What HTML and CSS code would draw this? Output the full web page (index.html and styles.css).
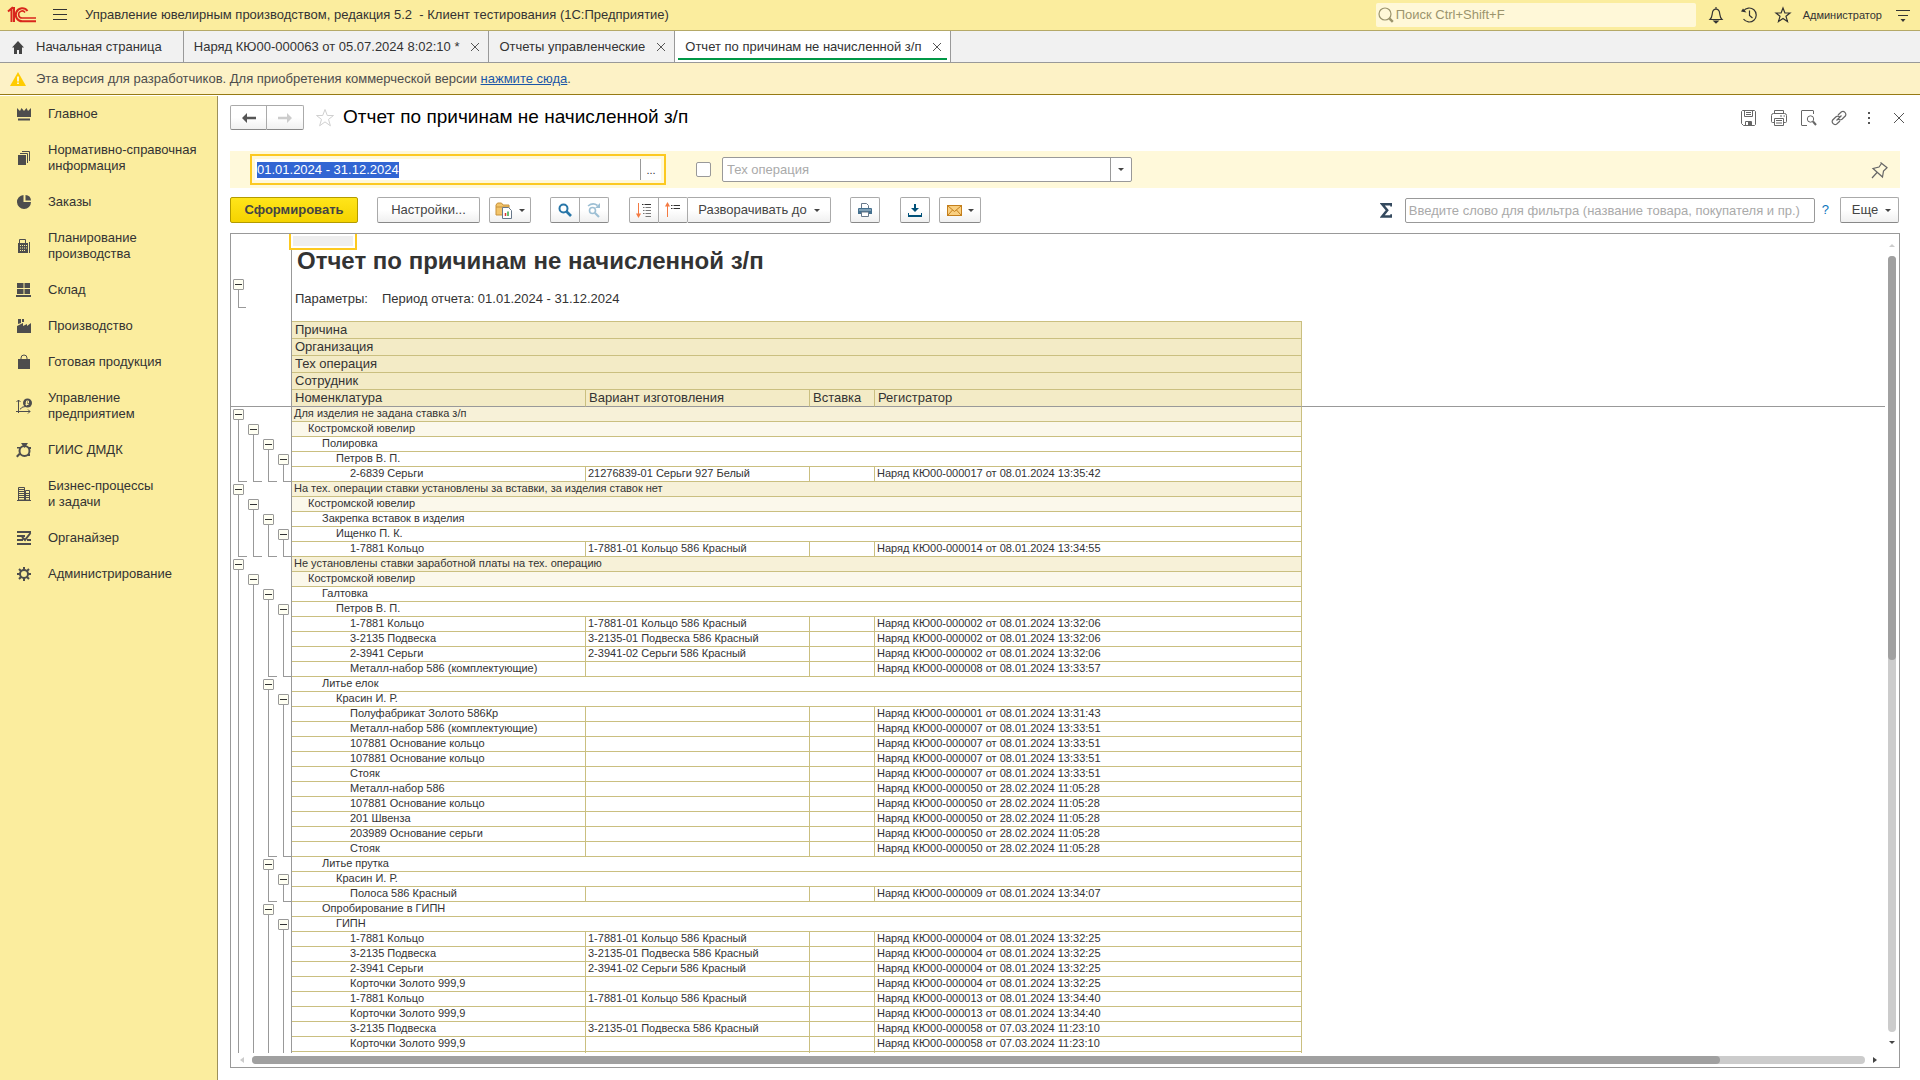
FILE: index.html
```html
<!DOCTYPE html>
<html lang="ru">
<head>
<meta charset="utf-8">
<title>Отчет по причинам не начисленной з/п</title>
<link rel="stylesheet" href="styles.css">
</head>
<body>
<header class="topbar">
  <svg class="logo" width="30" height="18" viewBox="0 0 30 18" fill="none" stroke="#d9261c" stroke-width="2"><path d="M1 5.500 4.500 2.500V16M4.500 2H7V16"/><path d="M20.500 5A6.500 6.500 0 1 0 15.500 15.300H29"/><path d="M18 6.500A3.500 3.500 0 1 0 15.500 12H29" stroke-width="1.600"/></svg>
  <button class="plain burger" aria-label="Меню"><svg width="16" height="14" viewBox="0 0 16 14" stroke="#333"><path d="M1 1.500h14M1 6.500h14M1 11.500h14"/></svg></button>
  <h1 class="app-title">Управление ювелирным производством, редакция 5.2 &nbsp;- Клиент тестирования (1С:Предприятие)</h1>
  <label class="search">
    <svg width="16" height="16" viewBox="0 0 16 16" fill="none" stroke="#9b946d" stroke-width="1.200"><circle cx="7" cy="7" r="6"/><path d="m11.300 11.300 3.500 3.500" stroke-width="2.500"/></svg>
    <input type="text" placeholder="Поиск Ctrl+Shift+F" aria-label="Поиск">
  </label>
  <nav class="top-tools">
    <button class="plain" aria-label="Оповещения"><svg width="16" height="18" viewBox="0 0 16 18" fill="none" stroke="#333" stroke-width="1.200"><path d="M2 13.500c2-2 2-3.500 2.300-6C4.600 4.500 6 3.200 8 3.200s3.400 1.300 3.700 4.300c.3 2.500.3 4 2.300 6ZM8 3V1"/><path d="M6 15h4l-2 2Z" fill="#333"/></svg></button>
    <button class="plain" aria-label="История"><svg width="18" height="18" viewBox="0 0 18 18" fill="none" stroke="#333" stroke-width="1.200"><path d="M3.500 5A7 7 0 1 1 3.500 13M9.500 4.500v5l3 2.500"/><path d="m1 5.500 5.500 1-3.500-4Z" fill="#333" stroke="none"/></svg></button>
    <button class="plain" aria-label="Избранное"><svg width="18" height="18" viewBox="0 0 18 18" fill="none" stroke="#333" stroke-width="1.200"><path d="m9 2 1.900 5H16l-4 3.300 1.500 5.200L9 12.400l-4.500 3.100L6 10.300 2 7h5.100Z"/></svg></button>
    <a class="user" href="#user">Администратор</a>
    <button class="plain" aria-label="Сервис"><svg width="16" height="16" viewBox="0 0 16 16" fill="none" stroke="#333" stroke-width="1.200"><path d="M1 3.500h14M3 8.500h10"/><path d="M5.500 12h5L8 15Z" fill="#333" stroke="none"/></svg></button>
  </nav>
</header>

<nav class="tabs">
  <a class="tab tab-home" href="#home"><svg width="16" height="14" viewBox="0 0 16 14" fill="#444"><path d="M8 1 2 7.500h2V14h3v-4h2v4h3V7.500h2Z"/></svg>Начальная страница</a>
  <div class="tab"><a href="#t1">Наряд КЮ00-000063 от 05.07.2024 8:02:10 *</a><button class="plain x" aria-label="Закрыть"></button></div>
  <div class="tab"><a href="#t2">Отчеты управленческие</a><button class="plain x" aria-label="Закрыть"></button></div>
  <div class="tab active"><a href="#t3">Отчет по причинам не начисленной з/п</a><button class="plain x" aria-label="Закрыть"></button></div>
</nav>

<div class="notice">
  <svg width="16" height="14" viewBox="0 0 16 14"><path d="M8 0 16 14H0Z" fill="#fc0"/><path d="M7.200 4.500h1.600v5H7.200zM7.200 10.500h1.600v1.500H7.200z" fill="#fff"/></svg>
  <p>Эта версия для разработчиков. Для приобретения коммерческой версии <a href="#buy">нажмите сюда</a>.</p>
</div>

<div class="workspace">
  <nav class="side">
    <a href="#s1"><svg viewBox="0 0 16 14"><path d="M1 1l3 3 1.500-3L8 4l2.500-3L12 4l3-3v9H1zM2 11.500h12v2H2z"/></svg><span>Главное</span></a>
    <a href="#s2"><svg viewBox="0 0 16 14"><path d="M2 4h8v10H2z"/><path d="M4 2.500h7.500V12M6 .5h7.500V10" class="ln"/></svg><span>Нормативно-справочная информация</span></a>
    <a href="#s3"><svg viewBox="0 0 16 14"><path d="M7.500 0v7H15A7 7 0 1 1 7.500 0Z"/><path d="M9.500 0A6 6 0 0 1 15 5.500H9.500Z"/></svg><span>Заказы</span></a>
    <a href="#s4"><svg viewBox="0 0 16 14"><path d="M3.500.5h6v4h-6z" class="ln"/><path fill-rule="evenodd" d="M2 4h10v10H2zM4 6v1h1V6zM6 6v1h1V6zM8 6v1h1V6zM10 6v1h1V6zM4 8.500v1h1v-1zM6 8.500v1h1v-1zM8 8.500v1h1v-1zM10 8.500v1h1v-1zM4 11v1h1v-1zM6 11v1h1v-1zM8 11v1h1v-1zM13 3h1v11h-1z"/></svg><span>Планирование производства</span></a>
    <a href="#s5"><svg viewBox="0 0 16 14"><path d="M1 0h6.500v5H1zM8.500 0H14v5H8.500zM1 6h6.500v5H1zM8.500 6H14v5H8.500zM0 12h15v2H0z"/></svg><span>Склад</span></a>
    <a href="#s6"><svg viewBox="0 0 16 14"><path d="M1 14V7l6-3v3l4-2v2l4-3v10zM2 0h3v4L2 5zM6 0h2v3H6z"/></svg><span>Производство</span></a>
    <a href="#s7"><svg viewBox="0 0 16 14"><path d="M2 4h12v10H2z"/><path d="M5 6V3a3 3 0 0 1 6 0v3" class="ln"/></svg><span>Готовая продукция</span></a>
    <a href="#s8"><svg viewBox="0 0 16 14"><path d="M2.500 14V1M0 12.500h14M.5 3l2-2 2 2M12 10.500l2 2-2 2M4 10c2 0 1-2 3-2s2-1 3-1" class="ln"/><circle cx="11.500" cy="4" r="4.500"/><path d="M10.500 6.500V2h2v2h-3M9.500 5.500h3" stroke="#fbed9e" fill="none"/></svg><span>Управление предприятием</span></a>
    <a href="#s9"><svg viewBox="0 0 16 14"><circle cx="8.500" cy="8" r="5" class="ln w2"/><path d="M5 0h7L8.500 5zM0 13l3-3 1.500 1.500-3 3zM1 4h3v1.500H1zM13 4h2v2h-2zM12 11h2v2h-2z"/></svg><span>ГИИС ДМДК</span></a>
    <a href="#s10"><svg viewBox="0 0 16 14"><path d="M2.500.5h6V13h-6zM9.500 3.500h4V13h-4zM3 2.500h5M3 4.500h5M3 6.500h11M3 8.500h11M3 10.500h11M1 13.500h14" class="ln"/></svg><span>Бизнес-процессы<br>и задачи</span></a>
    <a href="#s11"><svg viewBox="0 0 16 14"><path d="M1 0h14v2H1zM1 4h8v2H1zM1 8h6v2H1zM11 8h4v2h-4zM1 12h14v2H1z"/><path d="m6 6 3 3 5.500-7" class="ln w2"/></svg><span>Органайзер</span></a>
    <a href="#s12"><svg viewBox="0 0 16 14"><circle cx="8" cy="7" r="4" class="ln w2"/><path d="M8 0v3M8 11v3M1 7h3M12 7h3M3 2l2 2M11 10l2 2M3 12l2-2M11 4l2-2" class="ln w2"/></svg><span>Администрирование</span></a>
  </nav>

  <main class="page">
    <div class="page-head">
      <div class="group nav-group">
        <button class="btn" aria-label="Назад"><svg width="14" height="10" viewBox="0 0 14 10"><path d="M0 5 5 0v3.700h9v2.600H5V10Z" fill="#555"/></svg></button>
        <button class="btn" aria-label="Вперед"><svg width="14" height="10" viewBox="0 0 14 10"><path d="M14 5 9 0v3.700H0v2.600h9V10Z" fill="#ccc"/></svg></button>
      </div>
      <button class="plain" aria-label="В избранное"><svg width="20" height="20" viewBox="0 0 20 20" fill="none" stroke="#d0d0d0"><path d="m10 1.500 2.300 6h6.200l-5 3.900 1.900 6.400-5.400-3.900-5.400 3.900 1.900-6.400-5-3.900h6.200Z"/></svg></button>
      <h2>Отчет по причинам не начисленной з/п</h2>
      <div class="page-tools">
        <button class="plain" aria-label="Сохранить"><svg width="16" height="16" viewBox="0 0 16 16" fill="none" stroke="#666"><path d="M1.500.5h12l1 1v13l-1 1h-11l-2-2v-12ZM3.500.5v6h8v-6M5 2.500h5M5 4.500h5M4.500 15.500v-4h6v4"/><path d="M7 12h3v3H7z" fill="#666" stroke="none"/></svg></button>
        <button class="plain" aria-label="Печать"><svg width="16" height="16" viewBox="0 0 16 16" fill="none" stroke="#666"><path d="M3.500 3.500v-3h9v3M3.500 12.500h-2q-1 0-1-1v-6q0-2 2-2h11q2 0 2 2v6q0 1-1 1h-2M3.500 8.500h9v7h-9zM5 10.500h6M5 13h6M9 6h2M12.500 6h1.500"/></svg></button>
        <button class="plain" aria-label="Просмотр"><svg width="16" height="16" viewBox="0 0 16 16" fill="none" stroke="#666"><path d="M6 15.500H1q-.5 0-.5-.5V1Q.5.500 1 .500h11q.5 0 .5.500v3"/><circle cx="9.500" cy="9" r="3.200"/><path d="m12 11.500 3 3.500" stroke-width="2"/></svg></button>
        <button class="plain" aria-label="Ссылка"><svg width="16" height="16" viewBox="0 0 16 16" fill="none" stroke="#666" stroke-width="1.200"><path d="M7 5 10.500 1.800a3 3 0 0 1 4 4L11 9.200q-2 1.300-3.500 0M9 11l-3.500 3.200a3 3 0 0 1-4-4L5 6.800q2-1.300 3.500 0M5.500 10.500l5-5"/></svg></button>
        <button class="plain" aria-label="Еще"><svg width="16" height="16" viewBox="0 0 16 16" fill="#555"><path d="M7 2h2v2H7zM7 7h2v2H7zM7 12h2v2H7z"/></svg></button>
        <button class="plain" aria-label="Закрыть"><svg width="16" height="16" viewBox="0 0 16 16" stroke="#555"><path d="m3 3 10 10M13 3 3 13"/></svg></button>
      </div>
    </div>

    <div class="filters">
      <div class="date">
        <input id="period" type="text" value="01.01.2024 - 31.12.2024" aria-label="Период">
        <button class="plain" aria-label="Выбрать период">...</button>
      </div>
      <input type="checkbox" aria-label="Отбор по тех операции">
      <div class="combo">
        <input type="text" placeholder="Тех операция" aria-label="Тех операция">
        <button class="plain" aria-label="Открыть список"><i class="caret"></i></button>
      </div>
      <button class="plain pin" aria-label="Закрепить"><svg width="18" height="18" viewBox="0 0 18 18" fill="none" stroke="#666" stroke-width="1.200"><path d="m9.500 1.500 7 5.500M10.500 2.500 8 6l-6 1.500 9.500 8.500 1-6L16 6.700M6 11.500 1 17"/></svg></button>
    </div>

    <div class="toolbar">
      <button class="btn primary">Сформировать</button>
      <button class="btn settings">Настройки...</button>
      <button class="btn menu" aria-label="Варианты отчета"><svg width="18" height="17" viewBox="0 0 18 17"><path d="M1 3 2.500 1h4L8 3h6v3H8v7H1Z" fill="#f3c56b" stroke="#c8923a"/><path d="M1 5h13" stroke="#c8923a"/><path d="M7.500 5.500h6l3 3v8h-9z" fill="#fff" stroke="#68788a"/><path d="M10.500 11v3" stroke="#d33" stroke-width="1.500"/><path d="M13 9.500V14" stroke="#3a4" stroke-width="1.500"/></svg><i class="caret"></i></button>
      <div class="group find">
        <button class="btn" aria-label="Найти"><svg width="14" height="14" viewBox="0 0 14 14" fill="none" stroke="#2876a8"><circle cx="5.500" cy="5.500" r="4" stroke-width="2"/><path d="m8.500 8.500 4.500 4.500" stroke-width="2.600"/></svg></button>
        <button class="btn" aria-label="Найти далее"><svg width="16" height="16" viewBox="0 0 16 16" fill="none" stroke="#9dbfd4"><circle cx="6.500" cy="8.500" r="3" stroke-width="1.600"/><path d="m9 11 4 4" stroke-width="2.200"/><path d="M2 4q5-4 9.500-.5" stroke-width="1.600"/><path d="M14 1v5H9Z" fill="#9dbfd4" stroke="none"/></svg></button>
      </div>
      <div class="group expand">
        <button class="btn" aria-label="Развернуть"><svg width="16" height="16" viewBox="0 0 16 16"><path d="M2.500 1v12" stroke="#f47a42"/><path d="M0 11.500h5L2.500 16Z" fill="#f47a42"/><path d="M6 2.500h1.500M8.500 2.500H15" stroke="#333"/><path d="M7 5.500h1.500M9.500 5.500H15M7 8.500h1.500M9.500 8.500H15M7 11.500h1.500M9.500 11.500H15M9.500 14.500H15" stroke="#777"/></svg></button>
        <button class="btn" aria-label="Свернуть"><svg width="16" height="16" viewBox="0 0 16 16"><path d="M2.500 3v12" stroke="#f47a42"/><path d="M0 4.500h5L2.500 0Z" fill="#f47a42"/><path d="M6 3.500h1.500M8.500 3.500H15M6 6.500h1.500M8.500 6.500H15" stroke="#333"/></svg></button>
        <button class="btn menu wide">Разворачивать до<i class="caret"></i></button>
      </div>
      <button class="btn icon print" aria-label="Печать"><svg width="14" height="14" viewBox="0 0 14 14"><path d="M3.500 6V.5h5l2 2V6" fill="#fff" stroke="#68788a"/><path d="M1 5h12q1 0 1 1v5H0V6q0-1 1-1Z" fill="#44708f"/><path d="M1 7h12" stroke="#bcd0de"/><path d="M3.500 9h7v4.500h-7z" fill="#fff" stroke="#68788a"/></svg></button>
      <button class="btn icon load" aria-label="Сохранить в файл"><svg width="14" height="14" viewBox="0 0 14 14"><path d="M6 1h2v4h3L7 9 3 5h3zM0 10h1v2h12v-2h1v4H0z" fill="#005078"/></svg></button>
      <button class="btn menu" aria-label="Отправить"><svg width="15" height="11" viewBox="0 0 15 11"><rect x=".5" y=".5" width="14" height="10" fill="#f9cf80" stroke="#c47f1c"/><path d="m1 1 6.500 5.500L14 1M1 10l4.500-5M14 10 9.500 5" fill="none" stroke="#c47f1c"/></svg><i class="caret"></i></button>
      <svg class="sigma" width="12" height="15" viewBox="0 0 12 15" fill="none" stroke="#34495e" stroke-width="2.500"><path d="M11.500 3.500V1.300H2.200l5 6-5 6.200h9.300v-2.200"/></svg>
      <input class="word" type="text" placeholder="Введите слово для фильтра (название товара, покупателя и пр.)" aria-label="Фильтр">
      <a class="help" href="#help">?</a>
      <button class="btn menu more">Еще<i class="caret"></i></button>
    </div>

    <section class="report">
      <div class="sheet">
        <div class="intro">
          <div class="gutter"><button class="node" aria-label="Свернуть"></button><i class="stem"></i></div>
          <div class="intro-text">
            <i class="cell-cursor"></i>
            <h3>Отчет по причинам не начисленной з/п</h3>
            <p><span>Параметры:</span><span>Период отчета: 01.01.2024 - 31.12.2024</span></p>
          </div>
        </div>
        <table>
          <colgroup><col class="c-tree"><col class="c-name"><col class="c-variant"><col class="c-insert"><col class="c-reg"><col></colgroup>
          <thead>
            <tr><td class="tree"></td><th colspan="4">Причина</th><td></td></tr>
            <tr><td class="tree"></td><th colspan="4">Организация</th><td></td></tr>
            <tr><td class="tree"></td><th colspan="4">Тех операция</th><td></td></tr>
            <tr><td class="tree"></td><th colspan="4">Сотрудник</th><td></td></tr>
            <tr><td class="tree"></td><th>Номенклатура</th><th>Вариант изготовления</th><th>Вставка</th><th>Регистратор</th><td></td></tr>
          </thead>
          <tbody id="rows"></tbody>
        </table>
      </div>
      <div class="vbar"><i class="caret up"></i><div class="track"><div class="thumb"></div></div><i class="caret"></i></div>
      <div class="hbar"><i class="caret left"></i><div class="track"><div class="thumb"></div></div><i class="caret right"></i></div>
    </section>
  </main>
</div>
<script src="script.js"></script>
</body>
</html>
```
FILE: styles.css
```css
* { box-sizing: border-box; }
body {
  margin: 0;
  height: 100vh;
  display: flex;
  flex-direction: column;
  overflow: hidden;
  font: 13px/16px "Liberation Sans", Arial, sans-serif;
  color: #333;
  background: #fff;
}
h1, h2, h3, p { margin: 0; font-weight: normal; }
button, input { font: inherit; color: inherit; }
a { color: inherit; text-decoration: none; }
svg { flex: none; display: block; }
input { border: 0; outline: 0; padding: 0; background: none; min-width: 0; }
input::placeholder { color: #aaa; opacity: 1; }
input::selection { background: #3265d3; color: #fff; }
.plain { border: 0; background: none; padding: 0; display: flex; align-items: center; justify-content: center; }

.topbar {
  height: 31px;
  flex: none;
  display: flex;
  align-items: center;
  padding: 0 9px 0 7px;
  background: #fbed9e;
  border-bottom: 1px solid #b5a967;
}
.burger { margin: 0 17px 0 15px; }
.app-title { font-size: 13px; flex: 1; }
.search {
  width: 320px;
  height: 24px;
  display: flex;
  align-items: center;
  gap: 2px;
  padding: 0 2px;
  margin-right: 12px;
  background: #fff8d8;
  border-radius: 2px;
}
.search input { flex: 1; }
.search input::placeholder { color: #9b946d; }
.top-tools { display: flex; align-items: center; gap: 16px; }
.user { font-size: 11px; margin: 0 -3px 0 -5px; }

.tabs {
  height: 32px;
  flex: none;
  display: flex;
  background: #f1f1f1;
  border-bottom: 1px solid #999;
}
.tab {
  display: flex;
  align-items: center;
  gap: 12px;
  padding: 0 9px 0 10px;
  border-right: 1px solid #999;
}
.tab-home { padding: 0 21px 0 10px; gap: 10px; }
.tab.active { position: relative; background: #fff; }
.tab.active::after {
  content: "";
  position: absolute;
  left: 3px;
  right: 3px;
  bottom: 2px;
  height: 2px;
  background: #009846;
}
.x { width: 8px; height: 8px; background: linear-gradient(45deg, transparent 46%, #555 46% 54%, transparent 54%), linear-gradient(-45deg, transparent 46%, #555 46% 54%, transparent 54%); }

.notice {
  height: 32px;
  flex: none;
  display: flex;
  align-items: center;
  gap: 10px;
  padding: 0 10px;
  color: #4d4d4d;
  background: #fdf2c6;
  border-bottom: 1px solid #967a14;
}
.notice a { color: #1a56a8; text-decoration: underline; }

.workspace { flex: 1; min-height: 0; display: flex; padding-top: 1px; }
.side { width: 218px; flex: none; background: #fbed9e; border-right: 1px solid #9d905a; }
.side a { display: flex; align-items: center; gap: 16px; padding: 10px 16px; }
.side svg { width: 16px; height: 14px; fill: #4d4d4d; overflow: visible; }
.side .ln { fill: none; stroke: #4d4d4d; }
.side .w2 { stroke-width: 2; }

.page { flex: 1; min-width: 0; display: flex; flex-direction: column; padding: 9px 20px 12px 12px; }
.btn {
  height: 26px;
  display: flex;
  align-items: center;
  justify-content: center;
  padding: 0;
  color: #444;
  background: linear-gradient(#fff 50%, #f0f0f0);
  border: 1px solid #aaa;
  border-bottom-color: #888;
  border-radius: 2px;
}
.group { display: flex; }
.group .btn + .btn { border-left: 0; border-radius: 0 2px 2px 0; }
.group .btn:first-child { border-radius: 2px 0 0 2px; }
.caret { border: 3px solid transparent; border-top-color: #444; border-bottom: 0; }
.up { border: 3px solid transparent; border-bottom-color: #ccc; border-top: 0; }
.left { border: 3px solid transparent; border-right: 4px solid #ccc; border-left: 0; }
.right { border: 3px solid transparent; border-left: 4px solid #444; border-right: 0; }

.page-head { display: flex; align-items: center; gap: 11px; height: 25px; }
.nav-group .btn { width: 37px; height: 25px; }
.page-head h2 { flex: 1; margin: 0 0 2px -3px; font-size: 19px; line-height: 23px; color: #000; }
.page-tools { display: flex; gap: 14px; margin-right: -7px; }

.filters {
  height: 37px;
  display: flex;
  align-items: center;
  margin-top: 21px;
  padding: 0 11px 0 20px;
  background: #fff9da;
}
.date {
  width: 416px;
  height: 31px;
  display: flex;
  padding: 3px;
  border: 2px solid #fcc920;
}
.date input { flex: 1; padding-left: 2px; background: #fff; border-right: 1px solid #999; }
.date button { width: 20px; background: #fff; font-size: 11px; }
.filters input[type="checkbox"] {
  appearance: none;
  width: 15px;
  height: 15px;
  margin: 0 11px 0 30px;
  background: #fff;
  border: 1px solid #999;
  border-radius: 2px;
}
.combo { width: 410px; height: 25px; display: flex; background: #fff; border: 1px solid #999; border-radius: 2px; }
.combo input { flex: 1; padding-left: 4px; border-right: 1px solid #999; }
.combo button { width: 20px; }
.pin { margin-left: auto; }

.toolbar { display: flex; align-items: center; margin: 9px 1px 10px 0; }
.primary { width: 128px; font-weight: bold; background: linear-gradient(#ffe51a, #f5d300); border-color: #b39b00; }
.settings { width: 103px; margin: 0 9px 0 19px; }
.menu { width: 42px; gap: 6px; }
.find { margin: 0 20px 0 19px; }
.find .btn, .expand .btn { width: 29px; }
.find .btn:first-child, .expand .btn:first-child, .icon { width: 30px; }
.expand .wide { width: 143px; gap: 7px; }
.print { margin: 0 20px 0 19px; }
.load { margin-right: 9px; }
.sigma { margin-left: auto; }
.word { width: 410px; height: 25px; margin-left: 13px; padding: 0 3px; background: #fff; border: 1px solid #999; border-radius: 2px; }
.help { margin: 0 11px 0 7px; color: #0a74bd; }
.more { width: 59px; gap: 7px; padding-left: 4px; }

.report {
  flex: 1;
  min-height: 0;
  display: grid;
  grid-template: minmax(0, 1fr) 14px / minmax(0, 1fr) 14px;
  border: 1px solid #999;
}
.sheet { overflow: hidden; }
.intro { display: flex; height: 87px; }
.gutter { width: 61px; padding: 45px 0 0 2px; border-right: 1px solid #999; }
.node {
  display: block;
  position: relative;
  width: 11px;
  height: 11px;
  padding: 0;
  background: #fffff2;
  border: 1px solid #999;
  border-radius: 1px;
}
.node::after { content: ""; position: absolute; left: 1px; right: 1px; top: 4px; height: 1px; background: #333; }
.stem { display: block; width: 8px; height: 18px; margin-left: 5px; border: solid #999; border-width: 0 0 1px 1px; }
.intro-text { position: relative; padding: 14px 0 0 3px; }
.cell-cursor {
  position: absolute;
  left: -3px;
  top: 0;
  width: 68px;
  height: 16px;
  background: #eee;
  border: 2px solid #fcc920;
  border-top: 0;
  box-shadow: inset 0 0 0 2px #fff;
}
.intro-text h3 { padding-left: 2px; font-size: 24px; line-height: 26px; font-weight: bold; }
.intro-text p { display: flex; gap: 14px; margin-top: 17px; }

table { width: 100%; table-layout: fixed; border-spacing: 0; }
.c-tree { width: 61px; }
.c-name { width: 294px; }
.c-variant { width: 224px; }
.c-insert { width: 65px; }
.c-reg { width: 427px; }
th, td { padding: 0; text-align: left; font-weight: normal; white-space: nowrap; }
th { height: 17px; padding-left: 3px; line-height: 16px; background: #f3ebc6; border: solid #cabf80; border-width: 0 1px 1px 0; }
thead tr:first-child th { height: 18px; border-top-width: 1px; }
thead tr:last-child > * { border-bottom: 1px solid #999; }
.tree { border-right: 1px solid #999; }
.tree div { display: flex; height: 15px; }
tbody { font-size: 11px; line-height: 12px; }
.cell { height: 15px; padding-left: 2px; vertical-align: top; border: solid #cabf80; border-width: 0 1px 1px 0; }
.lvl0 .cell { background: #f7f1d8; }
.lvl1 .cell { background: #fbf8eb; padding-left: 16px; }
.lvl2 .cell { padding-left: 30px; }
.lvl3 .cell { padding-left: 44px; }
.lvl4 .name { padding-left: 58px; }
.slot { width: 15px; height: 15px; padding: 2px 0 0 2px; }
.slot .node::before { content: ""; position: absolute; left: 4px; top: 10px; width: 1px; height: 2px; background: #999; }
.bar { padding: 0 0 0 7px; }
.bar::before { content: ""; display: block; width: 8px; height: 15px; border-left: 1px solid #999; }
.end::before { height: 14px; border-bottom: 1px solid #999; }

.vbar { display: flex; flex-direction: column; align-items: center; gap: 9px; padding: 10px 0 9px; }
.vbar .track { flex: 1; width: 8px; background: #ccc; border-radius: 4px; }
.vbar .thumb { height: 52%; background: #a0a0a0; border-radius: 4px; }
.hbar { display: flex; align-items: center; gap: 8px; padding: 0 8px 0 9px; }
.hbar .track { flex: 1; height: 8px; background: #ccc; border-radius: 4px; }
.hbar .thumb { width: 91%; height: 8px; background: #a0a0a0; border-radius: 4px; }
```
FILE: script.js
```js
// Each row: [level, name, variant, register]; level 4 is a detail line.
const ring = "1-7881-01 Кольцо 586 Красный";
const pendant = "3-2135-01 Подвеска 586 Красный";
const earrings = "2-3941-02 Серьги 586 Красный";
const order = (no, time) => `Наряд КЮ00-0000${no} от ${time}`;
const data = [
  [0, "Для изделия не задана ставка з/п"],
  [1, "Костромской ювелир"],
  [2, "Полировка"],
  [3, "Петров В. П."],
  [4, "2-6839 Серьги", "21276839-01 Серьги 927 Белый", order("17", "08.01.2024 13:35:42")],
  [0, "На тех. операции ставки установлены за вставки, за изделия ставок нет"],
  [1, "Костромской ювелир"],
  [2, "Закрепка вставок в изделия"],
  [3, "Ищенко П. К."],
  [4, "1-7881 Кольцо", ring, order("14", "08.01.2024 13:34:55")],
  [0, "Не установлены ставки заработной платы на тех. операцию"],
  [1, "Костромской ювелир"],
  [2, "Галтовка"],
  [3, "Петров В. П."],
  [4, "1-7881 Кольцо", ring, order("02", "08.01.2024 13:32:06")],
  [4, "3-2135 Подвеска", pendant, order("02", "08.01.2024 13:32:06")],
  [4, "2-3941 Серьги", earrings, order("02", "08.01.2024 13:32:06")],
  [4, "Металл-набор 586 (комплектующие)", "", order("08", "08.01.2024 13:33:57")],
  [2, "Литье елок"],
  [3, "Красин И. Р."],
  [4, "Полуфабрикат Золото 586Кр", "", order("01", "08.01.2024 13:31:43")],
  [4, "Металл-набор 586 (комплектующие)", "", order("07", "08.01.2024 13:33:51")],
  [4, "107881 Основание кольцо", "", order("07", "08.01.2024 13:33:51")],
  [4, "107881 Основание кольцо", "", order("07", "08.01.2024 13:33:51")],
  [4, "Стояк", "", order("07", "08.01.2024 13:33:51")],
  [4, "Металл-набор 586", "", order("50", "28.02.2024 11:05:28")],
  [4, "107881 Основание кольцо", "", order("50", "28.02.2024 11:05:28")],
  [4, "201 Швенза", "", order("50", "28.02.2024 11:05:28")],
  [4, "203989 Основание серьги", "", order("50", "28.02.2024 11:05:28")],
  [4, "Стояк", "", order("50", "28.02.2024 11:05:28")],
  [2, "Литье прутка"],
  [3, "Красин И. Р."],
  [4, "Полоса 586 Красный", "", order("09", "08.01.2024 13:34:07")],
  [2, "Опробирование в ГИПН"],
  [3, "ГИПН"],
  [4, "1-7881 Кольцо", ring, order("04", "08.01.2024 13:32:25")],
  [4, "3-2135 Подвеска", pendant, order("04", "08.01.2024 13:32:25")],
  [4, "2-3941 Серьги", earrings, order("04", "08.01.2024 13:32:25")],
  [4, "Корточки Золото 999,9", "", order("04", "08.01.2024 13:32:25")],
  [4, "1-7881 Кольцо", ring, order("13", "08.01.2024 13:34:40")],
  [4, "Корточки Золото 999,9", "", order("13", "08.01.2024 13:34:40")],
  [4, "3-2135 Подвеска", pendant, order("58", "07.03.2024 11:23:10")],
  [4, "Корточки Золото 999,9", "", order("58", "07.03.2024 11:23:10")],
  [4, "", "", ""]
];

function slot(level, next, k) {
  if (level === k) return '<span class="slot"><button class="node" aria-label="Свернуть"></button></span>';
  if (level < k) return '<span class="slot"></span>';
  return `<span class="slot bar${next <= k ? " end" : ""}"></span>`;
}

document.getElementById("rows").innerHTML = data.map(([level, name, variant, reg], i) => {
  const next = i + 1 < data.length ? data[i + 1][0] : 4;
  const tree = [0, 1, 2, 3].map(k => slot(level, next, k)).join("");
  const cells = level < 4
    ? `<td class="cell" colspan="4">${name}</td>`
    : `<td class="cell name">${name}</td><td class="cell">${variant}</td><td class="cell"></td><td class="cell">${reg}</td>`;
  return `<tr class="lvl${level}"><td class="tree"><div>${tree}</div></td>${cells}<td></td></tr>`;
}).join("");

const period = document.getElementById("period");
period.focus();
period.select();
```
